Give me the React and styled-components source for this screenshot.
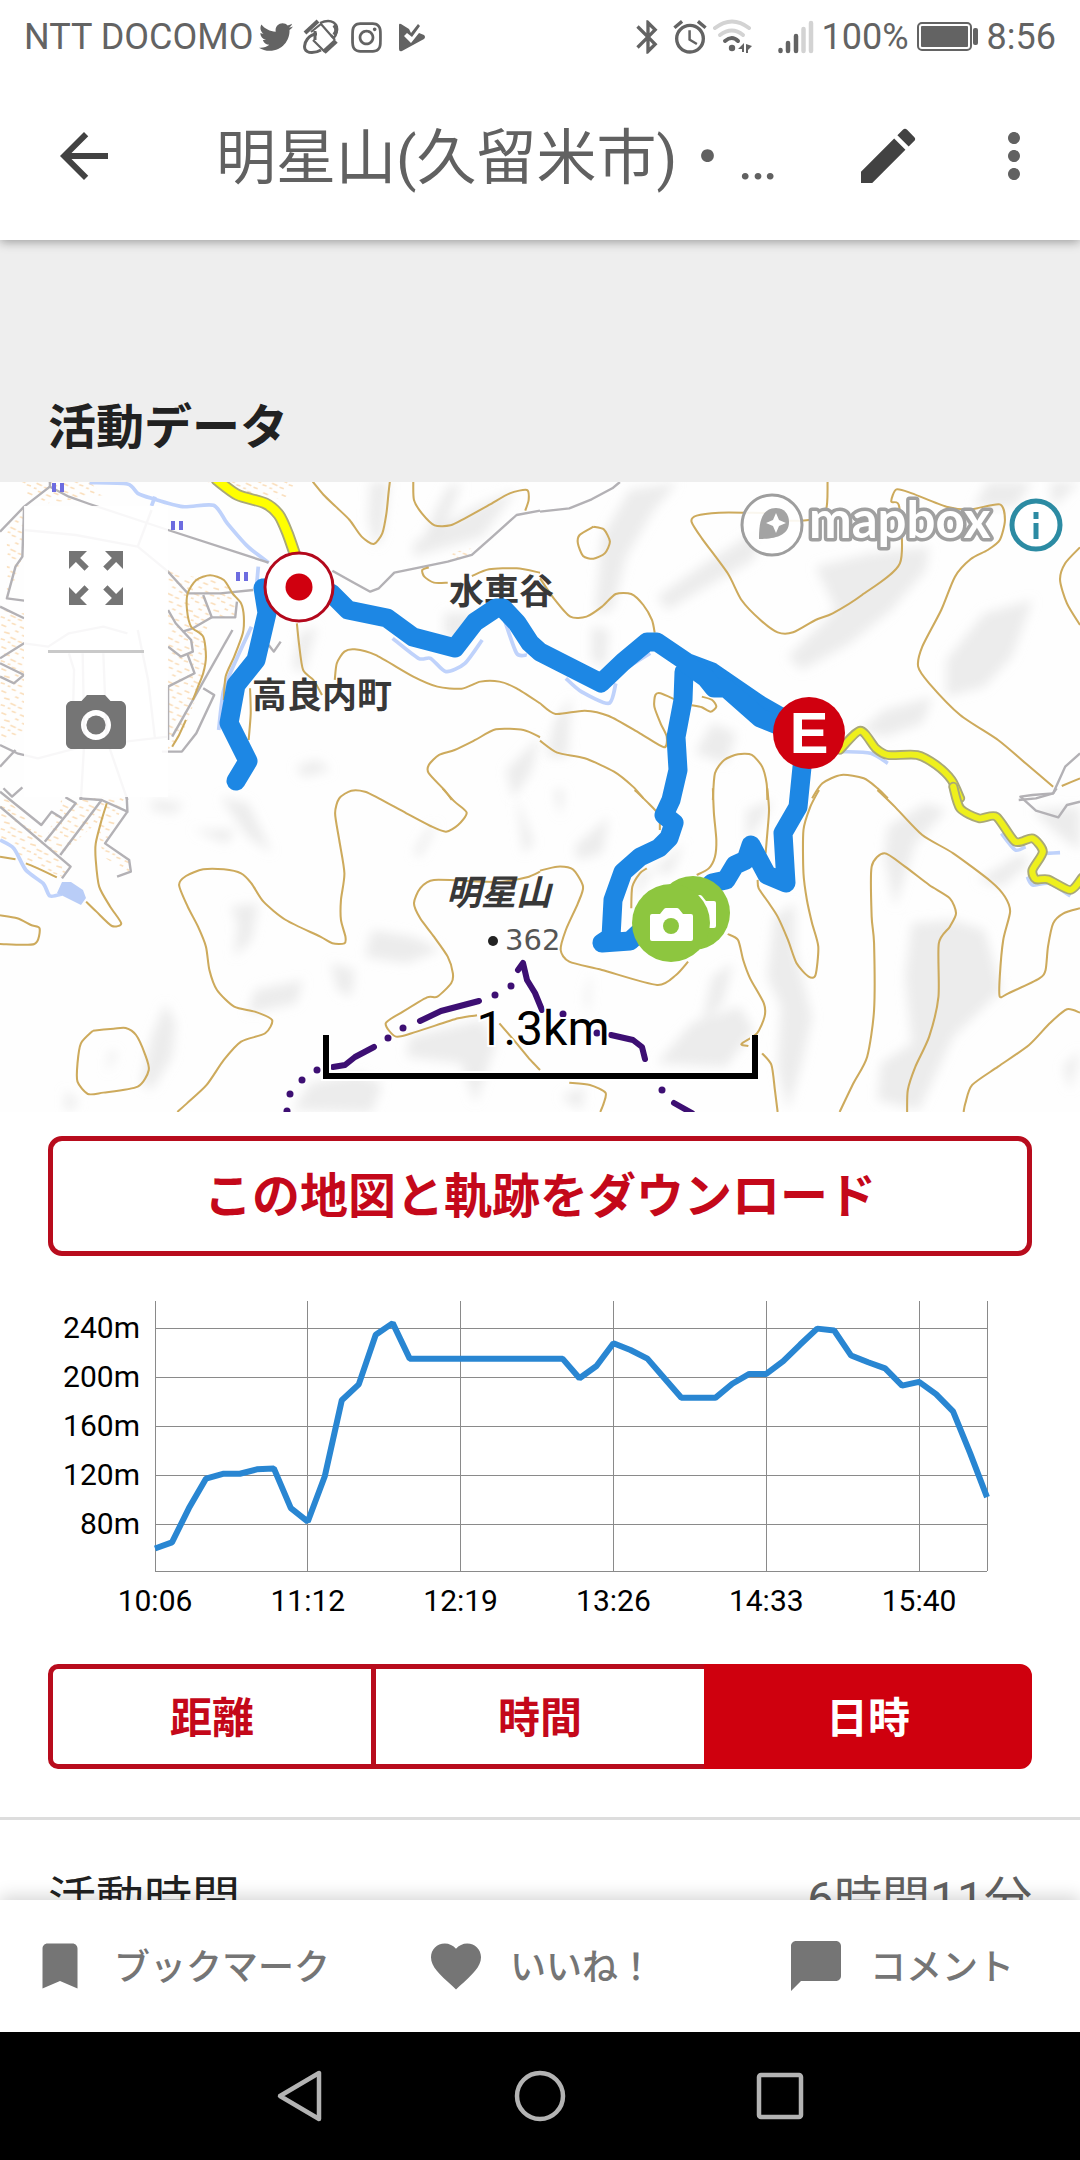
import React, { useState } from 'react';
import styled, { createGlobalStyle } from 'styled-components';
import { FaTwitter, FaInstagram } from 'react-icons/fa';
import {
  MdAlarm,
  MdArrowBack,
  MdBluetooth,
  MdBookmark,
  MdChatBubble,
  MdEdit,
  MdFavorite,
  MdMoreVert,
  MdPhotoCamera,
  MdZoomOutMap,
} from 'react-icons/md';

const GlobalStyle = createGlobalStyle`
  * {
    box-sizing: border-box;
  }
  body {
    margin: 0;
    background: #fff;
    font-family: Roboto, 'Noto Sans CJK JP', sans-serif;
  }
  button {
    margin: 0;
    padding: 0;
    border: 0;
    background: none;
    color: inherit;
    font: inherit;
    cursor: pointer;
  }
  svg {
    display: block;
    flex-shrink: 0;
  }
`;

const Screen = styled.div`
  display: flex;
  flex-direction: column;
  height: 100vh;
  overflow: hidden;
  background: #fff;
`;

const StatusBar = styled.div`
  position: relative;
  z-index: 3;
  display: flex;
  flex-shrink: 0;
  align-items: center;
  justify-content: space-between;
  height: 72px;
  padding: 2px 24px 0;
  background: #fff;
  color: #636363;
  font-size: 36px;
`;

const StatusLeft = styled.div`
  display: flex;
  align-items: center;
  gap: 6px;
`;

const Notifications = styled.div`
  display: flex;
  align-items: center;
  gap: 10px;
`;

const StatusRight = styled.div`
  display: flex;
  align-items: center;
  gap: 8px;
`;

const StatusIcons = styled.div`
  display: flex;
  align-items: center;
  gap: 2px;
  margin-right: 16px;
`;

const AppBar = styled.header`
  position: relative;
  z-index: 2;
  display: flex;
  align-items: center;
  height: 168px;
  flex-shrink: 0;
  padding: 0 30px 0 48px;
  background: #fff;
  box-shadow: 0 2px 10px rgba(0, 0, 0, 0.35);
`;

const IconButton = styled.button`
  display: flex;
  flex-shrink: 0;
  color: ${(props) => props.$color || '#424242'};
`;

const Title = styled.h1`
  flex: 1;
  min-width: 0;
  margin: 0 54px 0 96px;
  padding-top: 6px;
  overflow: hidden;
  white-space: nowrap;
  color: #616161;
  font-size: 60px;
  font-weight: 400;
  line-height: 88px;
`;

const BarActions = styled.div`
  display: flex;
  gap: 54px;
`;

const Content = styled.main`
  flex: 1;
  min-height: 0;
  overflow: hidden;
`;

const SectionHeading = styled.h2`
  margin: 0;
  padding: 152px 48px 18px;
  background: #eee;
  color: #212121;
  font-size: 48px;
  font-weight: 700;
  line-height: 72px;
`;

const MapBox = styled.section`
  position: relative;
  overflow: hidden;
`;

const MapSvg = styled.svg`
  width: 100%;
  height: 630px;
`;

const MapControls = styled.div`
  position: absolute;
  top: 24px;
  left: 24px;
  display: flex;
  flex-direction: column;
  align-items: center;
  width: 144px;
  background: rgba(255, 255, 255, 0.9);
`;

const MapControl = styled.button`
  display: flex;
  align-items: center;
  justify-content: center;
  width: 144px;
  height: 144px;
  color: #757575;
`;

const ControlDivider = styled.div`
  width: 96px;
  height: 3px;
  background: #c9c9c9;
`;

const DownloadButton = styled.button`
  display: block;
  width: calc(100% - 96px);
  height: 120px;
  margin: 24px 48px 0;
  padding-bottom: 8px;
  border: 5px solid #b80c1d;
  border-radius: 14px;
  color: #c4081a;
  font-size: 48px;
  font-weight: 700;
`;

const ChartSvg = styled.svg`
  width: 100%;
  margin: 24px 0 34px;
`;

const Tabs = styled.div`
  display: grid;
  grid-template-columns: repeat(3, 1fr);
  margin: 0 48px 48px;
`;

const Tab = styled.button`
  height: 105px;
  padding-bottom: 4px;
  border: 5px solid ${(props) => (props.$active ? '#cf000e' : '#b80c1d')};
  background: ${(props) => (props.$active ? '#cf000e' : '#fff')};
  color: ${(props) => (props.$active ? '#fff' : '#c4081a')};
  font-size: 42px;
  font-weight: 700;

  &:first-child {
    border-radius: 10px 0 0 10px;
  }
  &:nth-child(2) {
    border-left-width: 0;
    border-right-width: 0;
  }
  &:last-child {
    border-radius: 0 12px 12px 0;
  }
`;

const DataRow = styled.dl`
  display: flex;
  justify-content: space-between;
  margin: 0;
  padding: 44px 48px;
  border-top: 3px solid #ddd;
  color: #212121;
  font-size: 48px;
  line-height: 72px;
`;

const DataValue = styled.dd`
  margin: 0;
  color: #616161;
`;

const ActionBar = styled.footer`
  position: relative;
  z-index: 2;
  display: flex;
  flex-shrink: 0;
  height: 132px;
  background: #fff;
  box-shadow: 0 -4px 16px rgba(0, 0, 0, 0.16);
`;

const Action = styled.button`
  display: flex;
  flex: 1;
  align-items: center;
  justify-content: center;
  gap: 24px;
  color: #757575;
`;

const ActionLabel = styled.span`
  padding-bottom: 4px;
  font-size: 36px;
  font-weight: 500;
`;

const NavBar = styled.nav`
  position: relative;
  z-index: 3;
  display: flex;
  flex-shrink: 0;
  align-items: center;
  justify-content: center;
  gap: 180px;
  height: 128px;
  background: #000;
`;

// ---- status bar icons ----

const RotateIcon = () => (
  <svg width="36" height="36" viewBox="0 0 36 36" fill="none" stroke="currentColor" strokeWidth="2.6">
    <path d="M2 14 L15 2" strokeWidth="4" />
    <path d="M8 13 L18 5 L32 21 M22 33 L10 21" strokeWidth="2.2" />
    <path d="M17 4 C28 -1 37 4 33 15 C32 19 30 19 28 16" strokeWidth="2.4" />
    <path d="M31 6 C34 9 34 13 31 16" strokeWidth="4" />
    <path d="M21 33 L33 22" strokeWidth="5" />
    <path d="M14 15 C6 15 0 24 2 30 C4 35 13 34 18 31" strokeWidth="3" />
    <path d="M12 12 L12 21" strokeWidth="3" />
  </svg>
);

const PlayCheckIcon = () => (
  <svg width="36" height="36" viewBox="0 0 36 36">
    <path
      fill="currentColor"
      d="M5 6 Q5 4 7 5 L15 10 L17 14 L24 5 L26 7 L18 18 L13 14 L10 17 L17 24 L25 14 L30 16 Q32 18 30 20 L8 32 Q5 33 5 30 Z"
    />
  </svg>
);

const WifiIcon = () => (
  <svg width="42" height="40" viewBox="0 0 42 40" fill="none" strokeWidth="4" strokeLinecap="round">
    <path stroke="#d3d3d3" d="M3 11 Q20 -2 37 11" />
    <path stroke="#d3d3d3" d="M8 18 Q20 9 31 18" />
    <path stroke="currentColor" d="M13 24 Q20 18 26 24" />
    <circle cx="20" cy="31" r="3.2" fill="currentColor" />
    <path fill="currentColor" d="M32 26 V35 H30 V32 H26 Z M34 27 V36 H36 L36 33 L40 29 Z" />
  </svg>
);

const SignalIcon = () => (
  <svg width="36" height="36" viewBox="0 0 36 36" strokeWidth="4.5" strokeLinecap="round">
    <path stroke="currentColor" d="M2.5 31 V32 M10 24 V32 M18 17 V32" />
    <path stroke="#d3d3d3" d="M25.5 10 V32 M33 4 V32" />
  </svg>
);

const BatteryIcon = () => (
  <svg width="62" height="32" viewBox="0 0 62 32">
    <rect x="1" y="2" width="53" height="27" rx="4" fill="none" stroke="currentColor" strokeWidth="2" />
    <rect x="4" y="5" width="47" height="21" rx="1" fill="currentColor" />
    <rect x="56" y="7" width="5" height="17" rx="2" fill="currentColor" />
  </svg>
);

// ---- map ----

// Turns "x,y x,y ..." into a curve that passes through every point
const curve = (points) => {
  const p = points.split(' ').map((pair) => pair.split(',').map(Number));
  let d = `M${p[0]}`;
  for (let i = 0; i < p.length - 1; i += 1) {
    const a = p[i - 1] || p[i];
    const b = p[i];
    const c = p[i + 1];
    const e = p[i + 2] || c;
    d += ` C${b[0] + (c[0] - a[0]) / 8},${b[1] + (c[1] - a[1]) / 8}`;
    d += ` ${c[0] - (e[0] - b[0]) / 8},${c[1] - (e[1] - b[1]) / 8} ${c}`;
  }
  return d;
};

const TILES = [
  {
    id: 'nw',
    transform: 'translate(0 -102) scale(0.3444 0.3333)',
    fields: [
      '488,570 560,590 610,586 650,605 690,660 683,712 615,712 590,770 598,830 575,940 530,1060 488,1110',
      '0,690 70,700 70,1060 0,1090',
      '60,305 260,305 300,345 140,370 80,350',
      '600,305 860,305 830,350 780,360 690,340',
      '20,440 70,380 60,560 20,650',
      '1300,520 1370,505 1370,535 1310,545',
    ],
    shades: [
      '1075,305 1130,305 1110,470 1090,500 1070,420',
      '1300,320 1340,310 1290,440 1230,480 1260,400',
      '1380,380 1500,330 1400,470 1200,530 1200,490',
      '870,760 920,740 880,880 850,860',
      '1290,700 1380,700 1330,790 1290,760',
      '1470,1170 1568,1070 1540,1180 1490,1255',
      '860,1160 920,1140 960,1170 880,1190',
    ],
    contours: [
      '908,305 940,345 975,380 1015,420 1050,470 1085,492 1110,460 1122,400 1128,340 1132,305',
      '1200,305 1202,360 1225,400 1262,436 1308,436 1350,415 1420,375 1480,340 1530,330 1535,360 1525,392',
      '1300,608 1260,608 1232,590 1226,570 1245,562',
      '1370,588 1420,568 1500,565 1568,578',
      '650,960 655,890 680,830 705,760 708,710 700,670 675,640 650,600 610,586 570,600 545,640 543,690 555,740 590,770 598,830 590,880 575,920 560,960',
      '540,1020 520,1065 500,1100',
      '862,730 868,790 880,870 910,900 935,945',
      '972,900 978,850 1000,815 1030,808 1090,825 1200,890 1270,920 1340,926 1395,905 1450,905 1500,925 1568,970',
      '726,925 728,1000 722,1080',
      '1568,1072 1520,1050 1440,1048 1380,1080 1320,1110 1275,1125 1245,1155 1245,1180 1290,1230 1312,1260',
    ],
    roads: [
      '145,305 145,320 200,350 260,372 488,450 780,548',
      '145,320 70,380 0,455',
      '70,380 65,530 45,560 20,655 70,662',
      '0,680 70,715',
      '0,835 70,790 140,800 200,760 300,740 370,760',
      '0,850 70,885 40,910 0,890',
      '965,572 1030,610 1075,635 1100,625 1145,578 1230,560 1300,545 1370,525 1430,470 1500,405 1568,392',
      '488,575 545,640 640,640 735,630',
      '590,645 615,712 683,712 688,665',
      '615,712 560,745 530,755',
      '488,690 510,730 555,780 560,815 525,830 488,800',
      '545,825 565,880 488,920',
      '470,1115 528,1115 570,1060 622,945 590,925',
      '500,1070 675,750',
      '488,920 488,1080',
      '780,795 795,815 815,785',
      '0,1095 50,1120 110,1135 240,1100 488,1070',
      '0,1160 45,1110',
      '10,1225 35,1250 65,1222',
      '70,450 220,465 400,500 488,575',
      '400,500 440,390',
      '200,820 215,870 210,1080',
      '240,820 245,1080 235,1260',
      '300,820 310,1080 370,1260',
      '400,750 430,900 450,1075',
    ],
    rivers: [
      '260,308 370,312 400,340 440,355 530,380 620,376 660,430 720,500 780,548',
      '450,350 440,378',
      '750,560 745,620',
      '1140,775 1215,835 1250,835 1295,875 1350,850 1400,780',
      '1465,720 1500,820 1530,825',
      '730,740 690,830 650,930 635,1050',
    ],
    highways: ['630,300 690,345 770,370 810,405 835,460 862,540'],
  },
  {
    id: 'ne',
    transform: 'translate(540 -12) scale(0.3444 0.3333)',
    fields: [],
    shades: [
      '260,60 400,36 330,120 250,260 210,420 160,430 180,200',
      '340,380 480,280 660,160 620,270 450,370 370,420',
      '800,290 960,250 1130,230 1120,300 1020,420 900,520 760,600 720,560 860,420',
      '1000,720 1140,680 1110,760 1000,800 930,780',
      '1290,430 1430,390 1370,560 1290,650 1180,680 1180,570',
      '150,470 200,480 190,590 150,570',
      '1300,36 1430,36 1380,110 1260,110',
      '40,760 90,680 80,860 20,860',
      '500,760 570,790 540,880 450,850',
      '1480,36 1568,36 1490,110',
    ],
    contours: [
      '0,325 40,385 88,440 135,440 180,410 220,372 265,372 300,405 325,450 333,488',
      '0,700 45,732 130,722 200,738 290,790 360,832 368,800 350,760 332,710 335,675 350,670 390,688',
      '440,706 470,712 495,725 512,710 500,690 470,680',
      '0,812 50,848 130,865 215,905 270,950 300,985',
      '502,990 508,910 535,870 575,853 615,855 645,890 658,940 660,990',
      '790,985 820,940 875,915 940,925 980,955 1010,985',
      '835,36 830,120 780,150 700,150 660,130 600,128 520,128 455,137 440,155 470,205 545,310 585,390 640,450 690,487 735,487 800,450 850,430 935,375 1045,280 1043,110 1020,95 1035,58 1080,70 1180,110 1250,118 1335,103 1350,150 1335,210 1300,240 1250,268 1205,320 1165,420 1110,530 1098,590 1130,640 1220,735 1330,810 1410,880 1490,950',
      '1515,948 1568,925',
      '155,170 115,195 110,220 125,258 155,266 188,250 203,215 185,178 155,170',
      '1568,232 1525,280 1510,330 1530,400 1568,465',
    ],
    roads: ['0,125 85,115 150,88 210,55 232,36', '1390,990 1440,985 1490,970 1525,890 1568,850'],
    rivers: ['75,625 120,665 200,700 220,640', '250,595 320,550', '880,845 960,850 1010,880'],
    highways: ['870,840 930,782 975,835 1010,855 1095,855 1150,885 1195,930 1220,985'],
  },
  {
    id: 'sw',
    transform: 'translate(0 308) scale(0.3444 0.3333)',
    fields: [
      '0,5 205,225 180,260 75,220 0,140',
      '180,25 370,20 305,160 375,210 375,250 300,200 280,100 175,195 130,155',
    ],
    shades: [
      '480,640 510,700 500,800 440,900 410,880 440,740',
      '670,350 750,340 730,450 680,500 690,400',
      '900,880 1040,850 1110,880 1080,966 850,960',
      '1190,740 1400,690 1440,760 1380,940 1340,820 1180,800',
      '1080,420 1200,440 1280,480 1180,520 1060,500',
      '1240,120 1270,100 1220,200 1200,190',
      '640,20 720,40 790,190 720,140',
      '740,600 880,570 860,640 720,670',
      '1500,20 1550,160 1520,190',
      '440,30 530,40 510,70 440,60',
      '320,780 340,790 310,850',
      '560,120 680,120 660,160',
      '960,520 1030,540 1020,620 980,600',
      '190,900 230,940 190,966',
    ],
    contours: [
      '1285,-5 1320,35 1355,68 1330,105 1295,125 1250,108 1180,70 1100,25 1060,5 1020,2 985,25 973,70 985,150 1000,250 990,330 990,390 1003,440 1000,460 965,460 930,440 830,390 765,335 730,280 700,250 650,238 590,238 540,258 520,285 545,350 575,410 598,470 608,540 630,600 680,650 740,665 790,690 770,730 700,755 650,810 600,885 545,938 515,966',
      '270,722 235,760 225,820 225,875 255,912 300,908 400,890 432,840 420,790 395,735 365,714 330,716 270,722',
      '0,200 45,208',
      '75,220 110,235 165,262',
      '310,40 295,90 278,160 278,210 288,290 320,350 352,400 325,408 280,365 250,335',
      '0,376 50,385 90,405 115,415 100,462 0,462',
      '1568,245 1530,262 1460,275 1400,275 1260,270 1220,295 1202,340 1220,385 1260,440 1300,500 1315,550 1310,580 1270,620 1240,622 1170,665 1120,700 1150,740 1210,725 1330,685 1385,676',
      '1450,700 1500,760 1540,810 1568,840',
    ],
    roads: [
      '0,50 205,230 180,265',
      '0,5 120,105 150,65 180,85',
      '130,155 220,40 190,22',
      '175,195 295,30 230,25',
      '295,30 370,65 368,22',
      '370,65 305,160 375,210 380,245 340,260',
    ],
    rivers: ['0,150 40,175 75,240 125,280 145,318 180,312'],
    highways: [],
  },
  {
    id: 'se',
    transform: 'translate(540 308) scale(0.3444 0.3333)',
    fields: [],
    shades: [
      '380,250 420,160 330,240 270,330 290,240',
      '100,170 200,80 180,190 110,210',
      '680,380 740,340 740,480 790,680 760,820 720,960 690,830 700,650 660,560',
      '500,560 560,520 530,640 470,700',
      '1080,400 1200,390 1290,420 1340,600 1200,740 1100,960 980,930 990,820 1080,760 1060,560',
      '1010,110 1120,40 1180,60 1090,160 1030,350 1000,200',
      '1270,270 1400,190 1420,220 1340,290',
      '440,700 580,650 620,720 540,830 340,820',
      '1430,60 1568,50 1568,180 1500,130',
      '1520,830 1568,780 1540,900',
      '60,920 130,890 120,960',
      '40,0 70,0 60,80',
      '150,540 130,620 140,680',
      '600,60 680,30 600,160',
    ],
    contours: [
      '275,0 310,35 345,75 348,120',
      '0,242 50,230 95,238 125,290 110,340 75,420 60,480 85,515 180,540 340,585 395,555 430,515',
      '502,-5 505,70 512,150 508,200 490,235 455,255',
      '265,355 268,290 290,250 310,235',
      '660,-5 665,60 660,130 655,190',
      '632,270 635,295 665,340 690,380 720,450 745,520 780,560 800,555 808,470 790,400 775,330 765,250 765,120 785,50 810,0',
      '980,0 1030,50 1110,135 1200,190 1310,275 1350,320 1365,365 1345,450 1335,560 1335,620 1360,610 1450,565 1468,540 1475,470 1490,400 1520,370 1568,355',
      '545,432 575,450 590,510 610,565 650,640 652,680 630,730 585,762 605,768',
      '645,790 672,825 682,900 690,966',
      '870,966 910,880 950,800 970,660 970,460 963,380 963,230 1000,190 1060,230 1130,285 1190,325 1208,370 1190,410 1158,460 1157,620 1130,740 1090,830 1068,900 1066,966',
      '1568,668 1530,658 1480,700 1420,765 1330,830 1255,885 1235,940 1230,966',
      '85,878 145,885 190,908 185,940 175,966',
    ],
    roads: ['1568,35 1530,45 1505,82 1440,62 1395,20 1430,15 1490,10 1500,-5'],
    rivers: ['1340,130 1380,180 1410,170', '1470,190 1510,188', '1415,260 1430,285 1480,280 1540,318'],
    highways: ['1200,-10 1220,55 1275,85 1325,80 1380,155 1430,145 1460,185 1430,240 1440,268 1475,268 1540,300 1575,262'],
  },
];

const TRACKS = [
  '236,299 248,279 229,241 236,203 256,178 267,131 263,106 299,105 331,111 348,128 387,136 413,155 455,166 475,140 496,126 503,126 517,141 530,161 540,170 601,201 623,180 647,160 657,160 688,181 712,190 760,223 781,235 809,251 802,285 798,325 783,351 786,401 767,393 751,363 746,378 735,383 726,398 712,401 671,441 643,447 630,459 602,461 611,455 613,418 623,390 640,375 659,366 669,356 674,341 664,333 671,318 678,288 676,255 683,218 684,190',
  '688,183 706,196 714,206 726,206 760,236 790,248',
];

const BORDER_LINES = [
  'M333 585 L345 583 L355 575 L374 565',
  'M420 539 L441 529 L479 519',
  'M518 488 L523 481 L527 498 L535 511 L542 528',
  'M611 553 L633 558 L642 565 L645 577',
  'M674 621 L692 631',
];

const BORDER_DOTS = [
  [403, 546], [388, 556], [317, 588], [302, 598], [290, 612], [287, 629],
  [495, 513], [511, 504], [563, 532], [597, 551], [662, 608],
];

const PADDY_MARKS = [[52, 1], [171, 39], [236, 90]];

const CameraShape = ({ x, y }) => (
  <path
    transform={`translate(${x} ${y})`}
    fill="#fff"
    d="M2 6 H10 L14 1 Q15 0 16 0 H27 Q28 0 29 1 L33 6 H41 Q43 6 43 8 V31 Q43 33 41 33 H2 Q0 33 0 31 V8 Q0 6 2 6 Z"
  />
);

const Route = () => (
  <g>
    <g fill="none" stroke="#1d87e4" strokeWidth="19" strokeLinecap="round" strokeLinejoin="round">
      {TRACKS.map((points) => (
        <polyline key={points} points={points} />
      ))}
    </g>

    <circle cx="299" cy="105" r="34" fill="#fff" stroke="#b3081c" strokeWidth="3" />
    <circle cx="299" cy="105" r="13.5" fill="#d0000f" />

    <circle cx="809" cy="251" r="36" fill="#d0000f" />
    <text x="809" y="271" textAnchor="middle" fill="#fff" fontFamily="Liberation Sans, sans-serif" fontSize="58" fontWeight="700">
      E
    </text>

    <circle cx="693" cy="431" r="37" fill="#8dc63f" />
    <CameraShape x={673} y={413} />
    <circle cx="671" cy="441" r="39" fill="#8dc63f" />
    <CameraShape x={650} y={426} />
    <circle cx="671" cy="444" r="8" fill="#8dc63f" />
  </g>
);

const MapboxLogo = () => (
  <g>
    <circle cx="772" cy="43" r="30" fill="#fff" fillOpacity="0.9" stroke="#9e9e9e" strokeWidth="3" />
    <path fill="#a3a3a3" d="M759 57 C759 44 760 26 776 26 C784 26 789 32 789 40 C789 55 772 57 759 57 Z" />
    <path fill="#fff" d="M776 31 L779 38 L786 41 L779 44 L776 51 L773 44 L766 41 L773 38 Z" />
    <text
      x="809"
      y="56"
      fill="#fff"
      stroke="#a0a0a0"
      strokeWidth="7"
      strokeLinejoin="round"
      paintOrder="stroke"
      fontFamily="Lato, sans-serif"
      fontSize="51"
      fontWeight="700"
    >
      mapbox
    </text>
    <circle cx="1036" cy="43" r="24" fill="#fff" stroke="#2c8ba3" strokeWidth="5" />
    <path stroke="#2c8ba3" strokeWidth="5" d="M1036 30 V37 M1036 41 V57" />
  </g>
);

const ActivityMap = () => (
  <MapSvg viewBox="0 0 1080 630" preserveAspectRatio="xMidYMid slice" role="img" aria-label="活動マップ">
    <defs>
      <filter id="soft" x="-20%" y="-20%" width="140%" height="140%">
        <feGaussianBlur stdDeviation="16" />
      </filter>
      <pattern id="houses" width="76" height="66" patternUnits="userSpaceOnUse">
        <path
          d="M4 8 l14 6 M34 4 l12 4 M58 14 l14 6 M12 30 l16 5 M44 26 l10 5 M64 40 l10 4 M2 50 l12 4 M30 46 l16 7 M52 58 l12 4 M22 60 l8 2"
          stroke="#fadfbd"
          strokeWidth="5"
        />
      </pattern>
    </defs>
    <rect width="1080" height="630" fill="#fefefe" />
    {TILES.map((tile) => (
      <g key={tile.id} transform={tile.transform} fill="none" strokeLinejoin="round">
        <g fill="#dcdcdc" fillOpacity="0.55" filter="url(#soft)">
          {tile.shades.map((points) => (
            <polygon key={points} points={points} />
          ))}
        </g>
        {tile.fields.map((points) => (
          <polygon key={points} points={points} fill="url(#houses)" />
        ))}
        {tile.rivers.map((points) => (
          <path key={points} d={curve(points)} stroke="#bfd2fb" strokeWidth="11" />
        ))}
        {tile.roads.map((points) => (
          <polyline key={points} points={points} stroke="#b3b1b5" strokeWidth="7" />
        ))}
        {tile.contours.map((points) => (
          <path key={points} d={curve(points)} stroke="#cdaa5c" strokeWidth="6" />
        ))}
      </g>
    ))}
    <path d="M62 400 L57 411 L81 423 L86 416 L83 408 L71 400 Z" fill="#b9cdf7" />
    {TILES.map((tile) =>
      tile.highways.map((points) => (
        <g key={points} transform={tile.transform} fill="none" strokeLinecap="round" strokeLinejoin="round">
          <path d={curve(points)} stroke="#a9a878" strokeWidth={tile.id === 'nw' ? 36 : 29} />
          <path d={curve(points)} stroke={tile.id === 'nw' ? '#ffff00' : '#eef01c'} strokeWidth={tile.id === 'nw' ? 25 : 18} />
        </g>
      ))
    )}
    <g stroke="#6d6ce0" strokeWidth="4">
      {PADDY_MARKS.map(([x, y]) => (
        <path key={x} d={`M${x + 2} ${y} v9 M${x + 10} ${y} v9`} />
      ))}
    </g>
    <g fill="none" stroke="#3d0f73" strokeWidth="6" strokeLinecap="round" strokeLinejoin="round">
      {BORDER_LINES.map((d) => (
        <path key={d} d={d} />
      ))}
    </g>
    {BORDER_DOTS.map(([x, y]) => (
      <circle key={x} cx={x} cy={y} r="3.5" fill="#3d0f73" />
    ))}
    <g fill="#383838" fontFamily="Noto Sans CJK JP, sans-serif" fontSize="35" fontWeight="700">
      <text x="449" y="122">水車谷</text>
      <text x="252" y="226">高良内町</text>
      <text x="446" y="423" fontStyle="italic">明星山</text>
    </g>
    <circle cx="493" cy="459" r="5" fill="#222" />
    <text x="505" y="468" fill="#555" fontFamily="DejaVu Sans, sans-serif" fontSize="29">
      362
    </text>
    <Route />
    <g fill="none" strokeLinejoin="miter">
      <path d="M326 553 V594 H755 V553" stroke="#fff" strokeWidth="10" />
      <path d="M326 553 V594 H755 V553" stroke="#000" strokeWidth="6" />
    </g>
    <text x="543" y="563" textAnchor="middle" fontSize="48" stroke="#fff" strokeWidth="4" paintOrder="stroke" fontFamily="Roboto, sans-serif">
      1.3km
    </text>
    <MapboxLogo />
  </MapSvg>
);

// ---- elevation chart ----

const ELEVATIONS = [
  60, 65, 93, 117, 121, 121, 124.6, 125.4, 93, 82, 119, 181, 194, 234.5, 244, 215, 215, 215, 215, 215, 215, 215, 215,
  215, 215, 199, 209, 227.5, 222, 215, 199, 183, 183, 183, 194.5, 202.5, 202.5, 213, 226.5, 239.5, 238, 217.5,
  212, 207, 193, 196, 186, 172, 138, 102,
];
const HEIGHT_TICKS = [240, 200, 160, 120, 80];
const TIME_TICKS = ['10:06', '11:12', '12:19', '13:26', '14:33', '15:40'];

const CHART = { left: 155, right: 987, top: 21, bottom: 291 };
const chartY = (m) => 244 - (m - 80) * (49 / 40);
const chartX = (i) => CHART.left + (i * (CHART.right - CHART.left)) / (ELEVATIONS.length - 1);
const tickX = (i) => chartX(i * 9);

const ElevationChart = () => (
  <ChartSvg viewBox="0 0 1080 350" role="img" aria-label="標高グラフ">
    <g stroke="#8a8a8a" strokeWidth="1" shapeRendering="crispEdges">
      {HEIGHT_TICKS.map((m) => (
        <line key={m} x1={CHART.left} x2={CHART.right} y1={chartY(m)} y2={chartY(m)} />
      ))}
      <line x1={CHART.left} x2={CHART.right} y1={CHART.bottom} y2={CHART.bottom} />
      {TIME_TICKS.map((time, i) => (
        <line key={time} x1={tickX(i)} x2={tickX(i)} y1={CHART.top} y2={CHART.bottom} />
      ))}
      <line x1={CHART.right} x2={CHART.right} y1={CHART.top} y2={CHART.bottom} />
    </g>
    <polyline
      points={ELEVATIONS.map((m, i) => `${chartX(i)},${chartY(m)}`).join(' ')}
      fill="none"
      stroke="#2986d2"
      strokeWidth="6"
      strokeLinejoin="bevel"
    />
    <g fontFamily="Roboto, sans-serif" fontSize="30" fill="#000">
      {HEIGHT_TICKS.map((m) => (
        <text key={m} x="140" y={chartY(m) + 10} textAnchor="end">
          {m}m
        </text>
      ))}
      {TIME_TICKS.map((time, i) => (
        <text key={time} x={tickX(i)} y="331" textAnchor="middle">
          {time}
        </text>
      ))}
    </g>
  </ChartSvg>
);

const TABS = ['距離', '時間', '日時'];

export default function App() {
  const [tab, setTab] = useState('日時');

  return (
    <Screen>
      <GlobalStyle />
      <StatusBar>
        <StatusLeft>
          <span>NTT DOCOMO</span>
          <Notifications>
            <FaTwitter size={34} />
            <RotateIcon />
            <FaInstagram size={35} />
            <PlayCheckIcon />
          </Notifications>
        </StatusLeft>
        <StatusRight>
          <StatusIcons>
            <MdBluetooth size={40} />
            <MdAlarm size={40} />
            <WifiIcon />
          </StatusIcons>
          <SignalIcon />
          <span>100%</span>
          <BatteryIcon />
          <span>8:56</span>
        </StatusRight>
      </StatusBar>

      <AppBar>
        <IconButton aria-label="戻る">
          <MdArrowBack size={72} />
        </IconButton>
        <Title>明星山(久留米市)・…</Title>
        <BarActions>
          <IconButton aria-label="編集">
            <MdEdit size={72} />
          </IconButton>
          <IconButton aria-label="メニュー" $color="#616161">
            <MdMoreVert size={72} />
          </IconButton>
        </BarActions>
      </AppBar>

      <Content>
        <SectionHeading>活動データ</SectionHeading>
        <MapBox>
          <ActivityMap />
          <MapControls>
            <MapControl aria-label="全画面">
              <MdZoomOutMap size={72} />
            </MapControl>
            <ControlDivider />
            <MapControl aria-label="写真">
              <MdPhotoCamera size={72} />
            </MapControl>
          </MapControls>
        </MapBox>
        <DownloadButton>この地図と軌跡をダウンロード</DownloadButton>
        <ElevationChart />
        <Tabs>
          {TABS.map((name) => (
            <Tab key={name} $active={tab === name} onClick={() => setTab(name)}>
              {name}
            </Tab>
          ))}
        </Tabs>
        <DataRow>
          <dt>活動時間</dt>
          <DataValue>6時間11分</DataValue>
        </DataRow>
      </Content>

      <ActionBar>
        <Action>
          <MdBookmark size={60} />
          <ActionLabel>ブックマーク</ActionLabel>
        </Action>
        <Action>
          <MdFavorite size={60} />
          <ActionLabel>いいね！</ActionLabel>
        </Action>
        <Action>
          <MdChatBubble size={60} />
          <ActionLabel>コメント</ActionLabel>
        </Action>
      </ActionBar>

      <NavBar>
        <IconButton aria-label="戻る" $color="#b3b3b3">
          <svg width="60" height="60" viewBox="0 0 60 60" fill="none" stroke="currentColor" strokeWidth="4.5" strokeLinejoin="round">
            <path d="M49 7 V53 L10 30 Z" />
          </svg>
        </IconButton>
        <IconButton aria-label="ホーム" $color="#b3b3b3">
          <svg width="60" height="60" viewBox="0 0 60 60" fill="none" stroke="currentColor" strokeWidth="4.5">
            <circle cx="30" cy="30" r="23" />
          </svg>
        </IconButton>
        <IconButton aria-label="アプリ履歴" $color="#b3b3b3">
          <svg width="60" height="60" viewBox="0 0 60 60" fill="none" stroke="currentColor" strokeWidth="4.5">
            <rect x="9" y="9" width="42" height="42" rx="2" />
          </svg>
        </IconButton>
      </NavBar>
    </Screen>
  );
}
